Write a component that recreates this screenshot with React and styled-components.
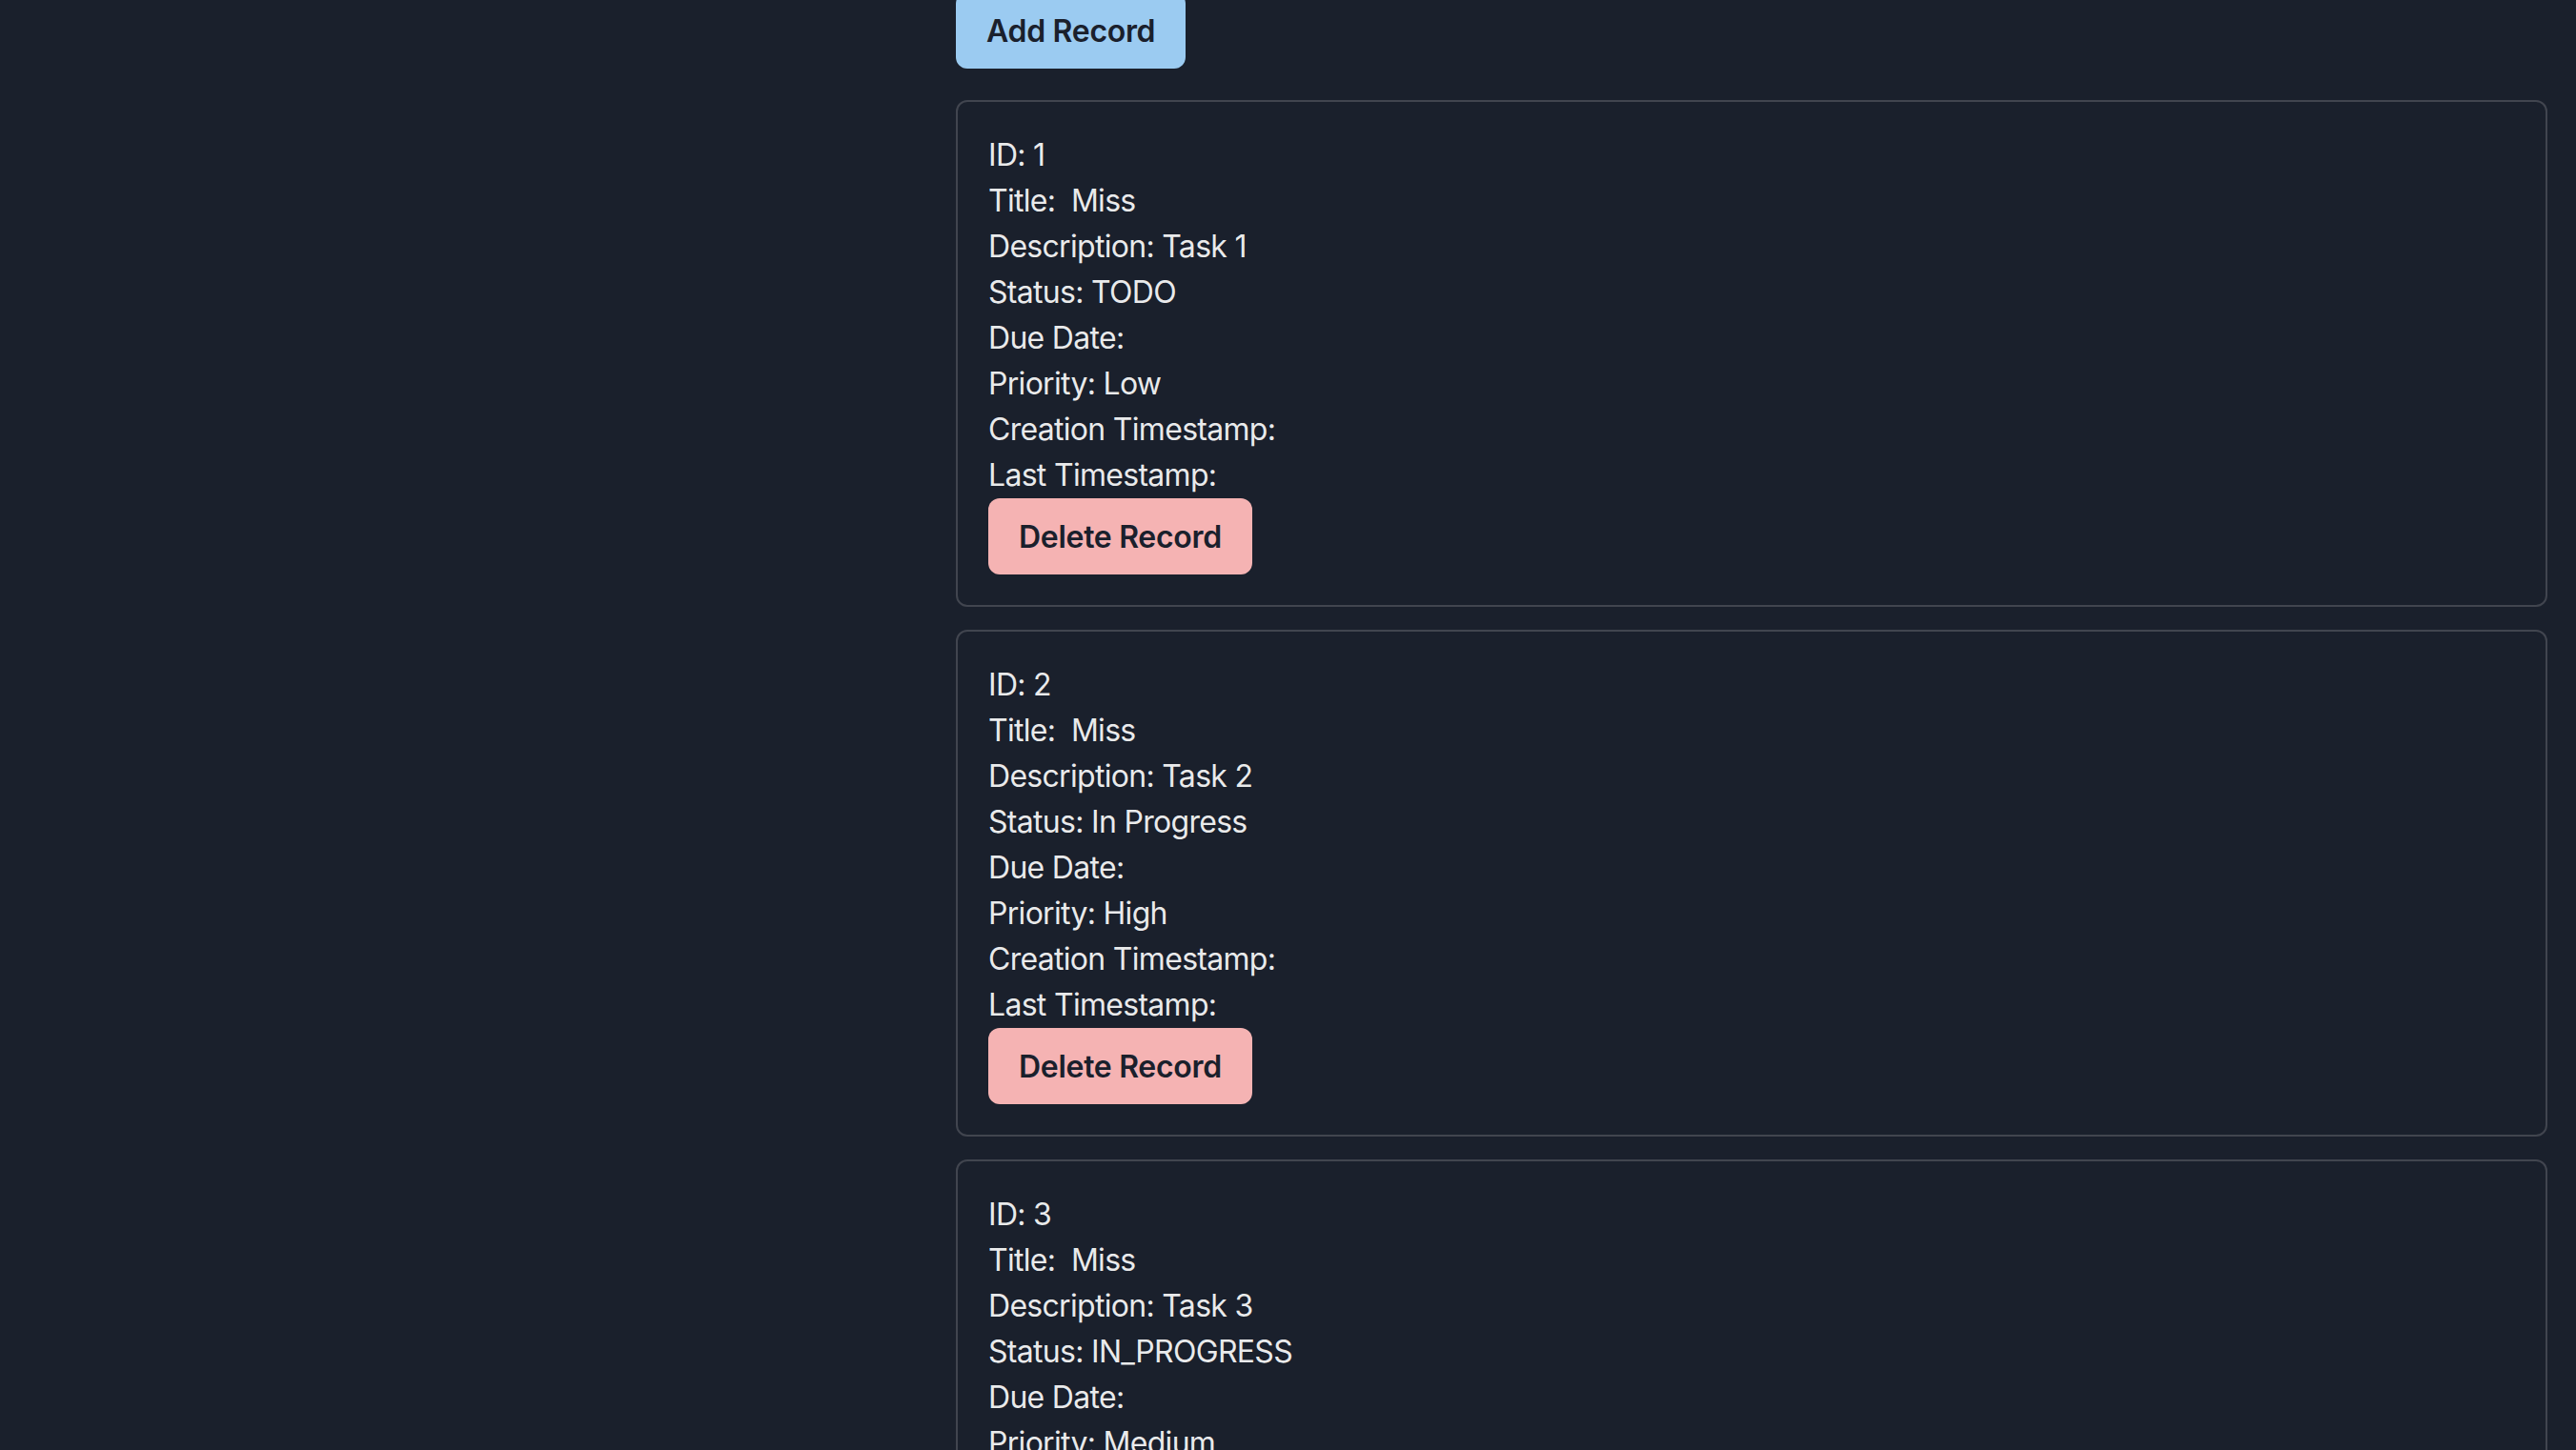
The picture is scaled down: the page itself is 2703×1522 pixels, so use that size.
import React from "react";
import styled, { createGlobalStyle } from "styled-components";

const GlobalStyle = createGlobalStyle`
  html, body {
    margin: 0;
    padding: 0;
    background: #1a202c;
    overflow: hidden;
  }
  body {
    font-family: Inter, "Noto Sans", sans-serif;
    color: rgba(255, 255, 255, 0.92);
  }
`;

const Page = styled.div`
  min-height: 1522px;
  background: #1a202c;
  padding: 0 30px 0 1003px;
  box-sizing: border-box;
`;

const Stack = styled.div`
  display: flex;
  flex-direction: column;
  align-items: flex-start;
  margin-top: -8px;
`;

const Button = styled.button`
  height: 80px;
  padding: 0 32px;
  border: none;
  border-radius: 12px;
  background: ${p => (p.danger ? "#f5b3b3" : "#9bcbf1")};
  color: #1a202c;
  font-family: Inter, "Noto Sans", sans-serif;
  font-size: 32px;
  font-weight: 600;
  letter-spacing: -0.3px;
  cursor: pointer;
`;

const Cards = styled.div`
  display: flex;
  flex-direction: column;
  gap: 24px;
  width: 100%;
  margin-top: 33px;
`;

const Card = styled.div`
  border: 2px solid #41454f;
  border-radius: 12px;
  padding: 32px;
`;

const Line = styled.p`
  margin: 0;
  font-size: 32px;
  line-height: 48px;
  letter-spacing: -0.7px;
  white-space: pre;
`;

const records = [
  { id: 1, title: "Miss", description: "Task 1", status: "TODO", priority: "Low" },
  { id: 2, title: "Miss", description: "Task 2", status: "In Progress", priority: "High" },
  { id: 3, title: "Miss", description: "Task 3", status: "IN_PROGRESS", priority: "Medium" }
];

export default function App() {
  return (
    <Page>
      <GlobalStyle />
      <Stack>
        <Button>Add Record</Button>
        <Cards>
          {records.map(record => (
            <Card key={record.id}>
              <Line>ID: {record.id}</Line>
              <Line>Title:  {record.title}</Line>
              <Line>Description: {record.description}</Line>
              <Line>Status: {record.status}</Line>
              <Line>Due Date: </Line>
              <Line>Priority: {record.priority}</Line>
              <Line>Creation Timestamp: </Line>
              <Line>Last Timestamp: </Line>
              <Button danger>Delete Record</Button>
            </Card>
          ))}
        </Cards>
      </Stack>
    </Page>
  );
}
